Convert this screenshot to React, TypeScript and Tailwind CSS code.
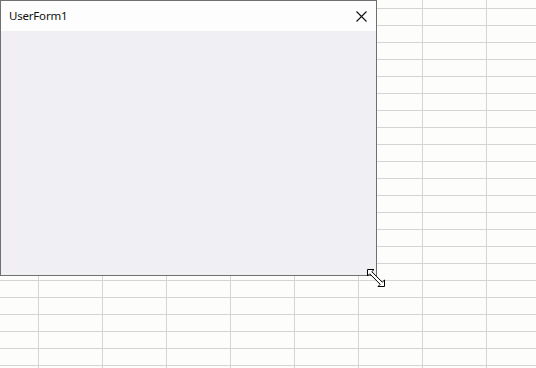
import React from 'react';

const COLS = 9;
const ROWS = 23;

const SheetGrid: React.FC = () => (
  <div className="-ml-[25px] -mt-[8px] flex flex-col">
    {Array.from({ length: ROWS }).map((_, r) => (
      <div key={r} className="flex">
        {Array.from({ length: COLS }).map((_, c) => (
          <div key={c} className="w-[64px] h-[17px] shrink-0 border-r border-b border-[#d5d5d5]" />
        ))}
      </div>
    ))}
  </div>
);

const ResizeCursor: React.FC = () => (
  <svg width="20" height="20" viewBox="0 0 20 20" className="absolute left-[366px] top-[268px]">
    <path
      d="M1.5 1.5 L8 1.5 L5.8 3.7 L16.3 14.2 L18.5 12 L18.5 18.5 L12 18.5 L14.2 16.3 L3.7 5.8 L1.5 8 Z"
      fill="#ffffff"
      stroke="#000000"
      strokeWidth="1"
      strokeLinejoin="miter"
    />
  </svg>
);

export default function App() {
  return (
    <div className="relative w-[536px] h-[368px] overflow-hidden bg-[#fdfdfb]" style={{ fontFamily: '"Noto Sans", "Open Sans", sans-serif' }}>
      <SheetGrid />

      <div className="absolute left-0 top-0 w-[377px] h-[276px] flex flex-col border border-[#707070] bg-[#f0f0f4]">
        <div className="h-[30px] flex items-center justify-between bg-[#fdfdfd] pl-[8px] pr-[8px]">
          <span className="text-[11.5px] tracking-[-0.2px] text-[#111] leading-none">UserForm1</span>
          <svg width="11" height="11" viewBox="0 0 11 11" className="mr-[1px]">
            <path d="M0.5 0.5 L10.5 10.5 M10.5 0.5 L0.5 10.5" stroke="#111" strokeWidth="1.1" />
          </svg>
        </div>
        <div className="flex-1 flex">
          <div className="w-[7px]" />
          <div className="w-[8px] bg-[#f3eef3]" />
          <div className="flex-1" />
        </div>
      </div>

      <ResizeCursor />
    </div>
  );
}
